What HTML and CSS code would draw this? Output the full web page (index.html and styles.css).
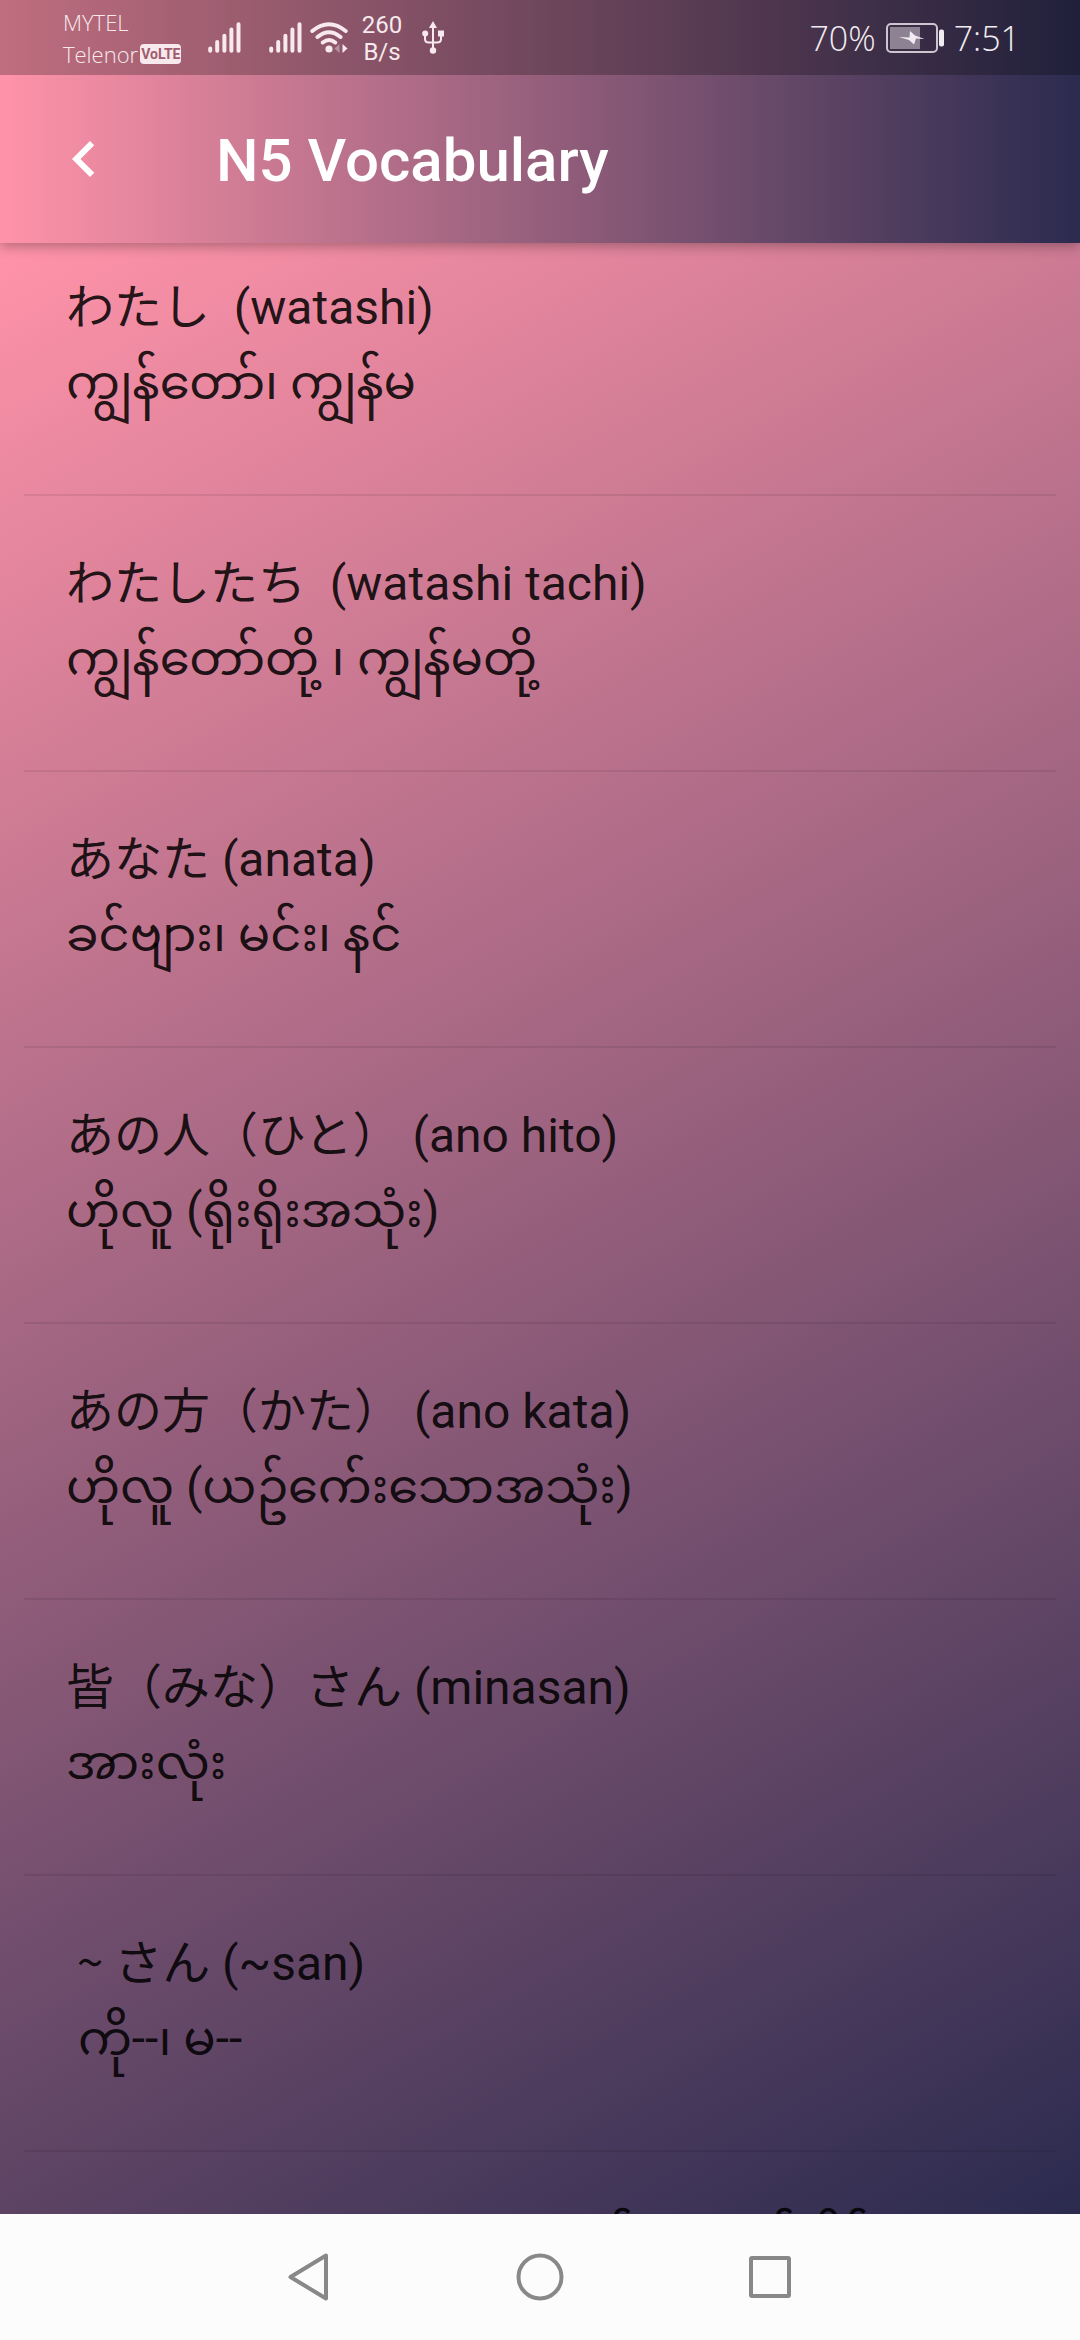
FILE: index.html
```html
<!DOCTYPE html>
<html lang="en">
<head>
<meta charset="utf-8">
<meta name="viewport" content="width=device-width, initial-scale=1">
<title>N5 Vocabulary</title>
<link rel="stylesheet" href="styles.css">
</head>
<body>
<div class="app">
  <header class="top">
    <div class="status">
      <div class="carriers">
        <span>MYTEL</span>
        <span class="carrier">Telenor <b class="volte">VoLTE</b></span>
      </div>
      <svg class="signal" viewBox="0 0 33 31" width="33" height="31" aria-hidden="true"><path d="M2.2 26.5v2.3M9.2 20v8.8M16.4 13.7v15.1M23.4 7.5v21.3M30.5 2.2v26.6"/></svg>
      <svg class="signal second" viewBox="0 0 33 31" width="33" height="31" aria-hidden="true"><path d="M2.2 26.5v2.3M9.2 20v8.8M16.4 13.7v15.1M23.4 7.5v21.3M30.5 2.2v26.6"/></svg>
      <svg class="wifi" viewBox="0 0 38 32" width="38" height="32" aria-hidden="true">
        <path class="arc" d="M2.3 9Q19-4.500 35.700 9M7.500 15Q19 5.500 30.500 15M12.800 20.500Q19 15.500 25.200 20.500"/>
        <circle cx="19" cy="27" r="3.600"/>
        <path class="dim" d="M29.500 22v9l-5-4.500z"/><path d="M32.500 22v9l5-4.500z"/>
      </svg>
      <div class="rate"><span>260</span><span>B/s</span></div>
      <svg class="usb" viewBox="0 0 22 33" width="22" height="33" aria-hidden="true">
        <path class="line" d="M11 5v23M3 13v5q0 3.500 4 3.500h8q4 0 4-3.500v-5"/>
        <path d="M11 0l4 7H7z"/><circle cx="3.200" cy="12.500" r="3"/><path d="M16 9.500h6v6h-6z"/><circle cx="11" cy="29.500" r="3.200"/>
      </svg>
      <div class="power">
        <span>70%</span>
        <svg class="battery" viewBox="0 0 58 30" width="58" height="30" aria-hidden="true">
          <rect class="shell" x="1" y="1" width="50" height="28" rx="4"/>
          <rect class="charge" x="4" y="4" width="30" height="22"/>
          <rect x="53" y="6.500" width="5" height="17" rx="2"/>
          <path d="M24 8l5 4.500 9.500 3.500-8.500-.5-2 6-5-4.500-10-3 10.500.5z"/>
        </svg>
        <span>7:51</span>
      </div>
    </div>
    <div class="bar">
      <button class="back" aria-label="Back"><svg viewBox="0 0 24 24" width="72" height="72"><path d="M15.410 7.410L14 6l-6 6 6 6 1.410-1.410L10.830 12z"/></svg></button>
      <h1>N5 Vocabulary</h1>
    </div>
  </header>
  <main class="content">
    <ul class="words">
      <li><p lang="ja">わたし  (watashi)</p><p lang="my">ကျွန်တော်၊ ကျွန်မ</p></li>
      <li><p lang="ja">わたしたち  (watashi tachi)</p><p lang="my"><span class="burmese">ကျွန်တော်တို&#160;့၊ ကျွန်မတို&#160;့</span></p></li>
      <li><p lang="ja">あなた (anata)</p><p lang="my">ခင်ဗျား၊ မင်း၊ နင်</p></li>
      <li><p lang="ja">あの人（ひと） (ano hito)</p><p lang="my">ဟိုလူ (ရိုးရိုးအသုံး)</p></li>
      <li><p lang="ja">あの方（かた） (ano kata)</p><p lang="my">ဟိုလူ (ယဥ်က်ေးသောအသုံး)</p></li>
      <li><p lang="ja">皆（みな）さん (minasan)</p><p lang="my">အားလုံး</p></li>
      <li><p lang="ja"><span class="kana"> ~ </span>さん (~san)</p><p lang="my"> ကို--၊ မ--</p></li>
      <li><p lang="ja">～ちゃん (~chan) ကနောက်သာတွင် နိုင်</p></li>
    </ul>
  </main>
  <nav class="keys" aria-label="System">
    <button aria-label="Back"><svg viewBox="0 0 48 48" width="48" height="48"><path d="M4.500 24L40 2.500v43z"/></svg></button>
    <button aria-label="Home"><svg viewBox="0 0 48 48" width="48" height="48"><circle cx="24" cy="24" r="21.500"/></svg></button>
    <button aria-label="Recents"><svg viewBox="0 0 48 48" width="48" height="48"><rect x="5" y="5" width="38" height="38" rx="1"/></svg></button>
  </nav>
</div>
</body>
</html>
```
FILE: styles.css
```css
:root {
  --pink: #ff93a9;
  --navy: #2b2b4f;
}

* { box-sizing: border-box; }

body {
  margin: 0;
  font-family: Roboto, "Noto Sans CJK JP", "Noto Sans Myanmar", "Noto Sans", sans-serif;
}

button {
  display: grid;
  place-items: center;
  padding: 0;
  border: 0;
  background: none;
}

.app {
  display: flex;
  flex-direction: column;
  height: 100vh;
}

.top {
  flex: none;
  position: relative;
  background: linear-gradient(to right, var(--pink), var(--navy));
  box-shadow: 0 3px 12px rgba(0, 0, 0, 0.3);
}

/* Status strip */
.status {
  display: flex;
  align-items: center;
  height: 75px;
  padding: 0 60px 0 63px;
  background: rgba(0, 0, 0, 0.25);
  color: #f7e9ed;
  fill: #f7e9ed;
}

.carriers {
  display: flex;
  flex-direction: column;
  width: 145px;
  font: 300 22px/32px "Open Sans", sans-serif;
}

.carrier {
  display: flex;
  align-items: center;
  gap: 2px;
}

.volte {
  padding: 0 1px;
  border-radius: 4px;
  background: #f7e9ed;
  color: #a05c6d;
  font: 700 14px/20px Roboto, sans-serif;
}

.signal {
  fill: none;
  stroke: #f7e9ed;
  stroke-width: 4;
  stroke-linecap: round;
}

.second { margin-left: 28px; }

.wifi { margin-left: 8px; }

.arc {
  fill: none;
  stroke: #f7e9ed;
  stroke-width: 4;
  stroke-linecap: round;
}

.dim { opacity: 0.4; }

.rate {
  display: flex;
  flex-direction: column;
  align-items: center;
  width: 68px;
  padding-top: 2px;
  font-size: 24px;
  line-height: 27px;
}

.usb { margin-left: 6px; }

.line {
  fill: none;
  stroke: #f7e9ed;
  stroke-width: 2;
}

.power {
  display: flex;
  align-items: center;
  gap: 10px;
  margin-left: auto;
  font: 300 34px/48px "Open Sans", sans-serif;
  color: #f1ecf1;
  fill: #f1ecf1;
}

.shell {
  fill: none;
  stroke: #cdc6d0;
  stroke-width: 2;
}

.charge { opacity: 0.45; }

/* Title bar */
.bar {
  display: flex;
  align-items: center;
  height: 168px;
}

.back {
  width: 168px;
  height: 168px;
  fill: #fff;
}

h1 {
  margin: 0 48px;
  padding-top: 4px;
  color: #fff;
  font-size: 60px;
  font-weight: 500;
  line-height: 72px;
}

/* Word list */
.content {
  flex: 1;
  min-height: 0;
  overflow: hidden;
  background: linear-gradient(151deg, var(--pink), var(--navy));
}

.words {
  margin: 0;
  padding: 0 24px;
  list-style: none;
}

.words li {
  height: 276px;
  padding: 50px 42px 0;
  border-bottom: 2px solid rgba(0, 0, 0, 0.08);
  color: rgba(0, 0, 0, 0.87);
  font-size: 48px;
  line-height: 75px;
  white-space: pre;
}

.words li:first-child {
  height: 253px;
  padding-top: 27px;
}

.words p { margin: 0; height: 75px; }

.kana,
.burmese { line-height: 48px; }

.kana { font-family: "Noto Sans CJK JP", sans-serif; }

.burmese { font-family: "Noto Sans Myanmar", Roboto, sans-serif; }

/* System keys */
.keys {
  flex: none;
  display: flex;
  justify-content: center;
  height: 126px;
  background: #fcfcfc;
}

.keys button {
  width: 230px;
  fill: none;
  stroke: #888;
  stroke-width: 4;
  stroke-linejoin: round;
}
```
